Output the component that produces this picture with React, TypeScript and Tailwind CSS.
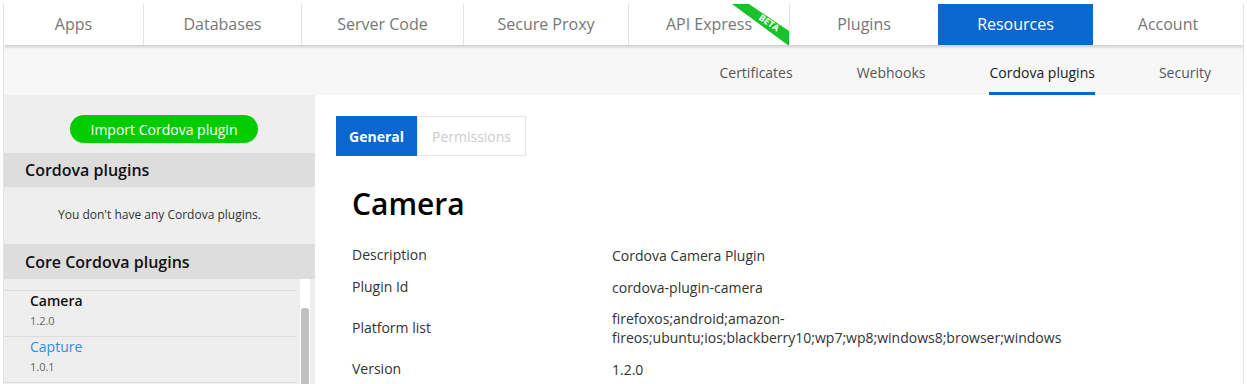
import React from "react";

const tabs = [
  { label: "Apps", w: 139 },
  { label: "Databases", w: 158 },
  { label: "Server Code", w: 162 },
  { label: "Secure Proxy", w: 165 },
  { label: "API Express", w: 161, beta: true },
  { label: "Plugins", w: 149 },
  { label: "Resources", w: 155, active: true },
  { label: "Account", w: 150 },
];

export default function App() {
  return (
    <div
      className="min-h-[384px] bg-white pt-[4px] pl-[3px] overflow-hidden"
      style={{ fontFamily: '"Open Sans", "Noto Sans", sans-serif' }}
    >
      <div className="w-[1241px] border-x border-[#e3e3e3] h-[380px] overflow-hidden flex flex-col">
        {/* Top nav */}
        <div className="relative z-10 flex h-[41px] bg-white shadow-[0_2px_3px_rgba(0,0,0,0.18)]">
          {tabs.map((t, i) => (
            <div
              key={t.label}
              style={{ width: t.w }}
              className={
                "relative flex items-center justify-center text-[16px] " +
                (t.active
                  ? "bg-[#0a67cf] text-white"
                  : "text-[#777777] " + (i > 0 && !tabs[i - 1].active ? "border-l border-[#e4e4e4]" : ""))
              }
            >
              <span className="relative top-[-1px]">{t.label}</span>
              {t.beta && (
                <svg
                  className="absolute right-0 top-0"
                  width="161"
                  height="41"
                  viewBox="0 0 161 41"
                >
                  <polygon points="104,0 121,0 161,27 161,42" fill="#19c12a" />
                  <text
                    x="141"
                    y="22"
                    fill="white"
                    fontSize="9"
                    fontWeight="700"
                    textAnchor="middle"
                    transform="rotate(35 141 19)"
                    style={{ fontFamily: '"Open Sans", sans-serif' }}
                  >
                    BETA
                  </text>
                </svg>
              )}
            </div>
          ))}
        </div>

        {/* Sub nav */}
        <div className="flex h-[50px] justify-end bg-[#f7f7f7] text-[14px] text-[#555555]">
          {["Certificates", "Webhooks", "Cordova plugins", "Security"].map((s) => (
            <div key={s} className="px-8 flex flex-col">
              <div
                className={
                  "flex-1 flex items-center pt-[8px] " +
                  (s === "Cordova plugins" ? "text-[#222] border-b-[3px] border-[#0a67cf]" : "border-b-[3px] border-transparent")
                }
              >
                {s}
              </div>
            </div>
          ))}
        </div>

        <div className="flex flex-1 min-h-0">
          {/* Sidebar */}
          <div className="w-[311px] bg-[#eeeeee] flex flex-col">
            <div className="flex justify-center pt-[20px] pb-[10px]">
              <button className="w-[188px] h-[28px] rounded-full bg-[#0c0] text-white text-[14px] ml-[9px]">
                Import Cordova plugin
              </button>
            </div>
            <div className="h-[34px] bg-[#dddddd] flex items-center pl-[21px] text-[16px] font-semibold text-[#111]">
              Cordova plugins
            </div>
            <div className="h-[57px] flex items-center justify-center text-[12px] text-[#333] pb-[1px]">
              You don't have any Cordova plugins.
            </div>
            <div className="h-[35px] bg-[#dddddd] flex items-center pl-[21px] text-[16px] font-semibold text-[#111]">
              Core Cordova plugins
            </div>
            <div className="flex flex-1 min-h-0">
              <div className="w-[293px] pt-[11px]">
                {[
                  { n: "Camera", v: "1.2.0", c: "text-[#111] font-semibold" },
                  { n: "Capture", v: "1.0.1", c: "text-[#2e8fe0]" },
                ].map((p) => (
                  <div key={p.n} className="border-t border-[#dcdcdc] pl-[26px] h-[46px]">
                    <div className={"text-[14px] leading-[20px] " + p.c}>{p.n}</div>
                    <div className="text-[11px] text-[#666] leading-[20px]">{p.v}</div>
                  </div>
                ))}
                <div className="border-t border-[#dcdcdc]" />
              </div>
              <div className="w-[10px] ml-[3px] bg-white relative">
                <div className="absolute left-[1px] right-[1px] top-[29px] bottom-0 bg-[#c1c1c1] rounded-t-[3px]" />
              </div>
            </div>
          </div>

          {/* Main */}
          <div className="flex-1 bg-white pl-[21px] pt-[21px]">
            <div className="flex h-[40px] text-[14px]">
              <div className="w-[81px] bg-[#0a67cf] text-white font-bold flex items-center justify-center">
                General
              </div>
              <div className="w-[109px] border border-[#e6e6e6] text-[#cccccc] flex items-center justify-center">
                Permissions
              </div>
            </div>
            <div className="pl-[16px]">
              <h1 className="mt-[30px] text-[30px] leading-[35px] font-semibold text-black">Camera</h1>
              <table className="mt-[18px] text-[14px] text-[#333]">
                <tbody>
                  {[
                    ["Description", "Cordova Camera Plugin"],
                    ["Plugin Id", "cordova-plugin-camera"],
                    [
                      "Platform list",
                      "firefoxos;android;amazon-fireos;ubuntu;ios;blackberry10;wp7;wp8;windows8;browser;windows",
                    ],
                    ["Version", "1.2.0"],
                  ].map(([k, v]) => (
                    <tr key={k}>
                      <td className="w-[260px] py-[6px] leading-[20px] align-middle">{k}</td>
                      <td className="w-[480px] py-[6px] leading-[19px] align-middle break-words">{v}</td>
                    </tr>
                  ))}
                </tbody>
              </table>
            </div>
          </div>
        </div>
      </div>
    </div>
  );
}
